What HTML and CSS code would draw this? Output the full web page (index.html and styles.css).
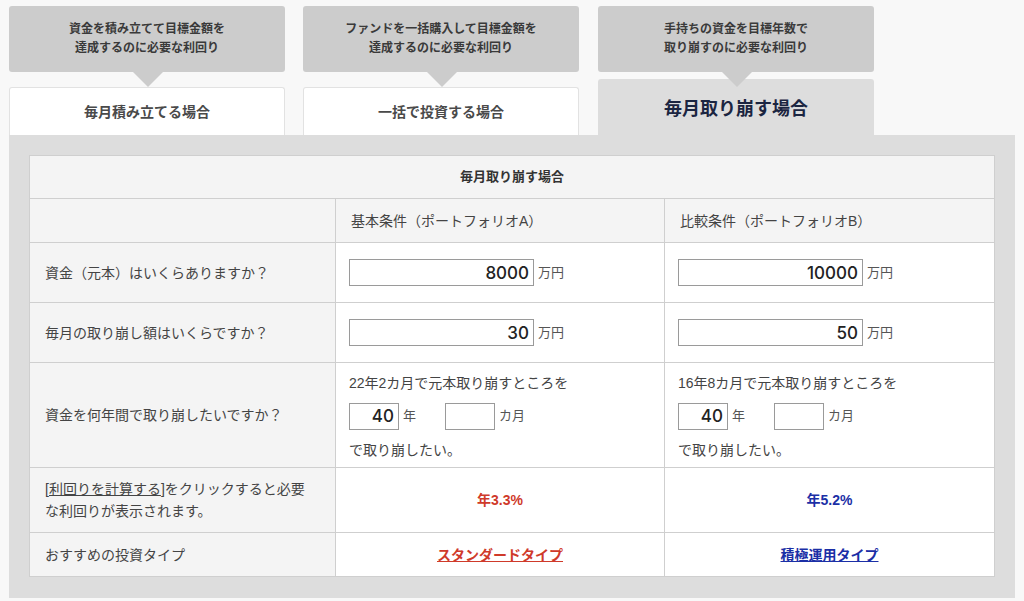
FILE: index.html
```html
<!DOCTYPE html>
<html lang="ja">
<head>
<meta charset="utf-8">
<title>利回り計算</title>
<link rel="stylesheet" href="styles.css">
</head>
<body>
<div class="wrap">
  <div class="tabs">
    <div class="tab-item">
      <div class="tip">資金を積み立てて目標金額を<br>達成するのに必要な利回り</div>
      <div class="tab">毎月積み立てる場合</div>
    </div>
    <div class="tab-item">
      <div class="tip">ファンドを一括購入して目標金額を<br>達成するのに必要な利回り</div>
      <div class="tab">一括で投資する場合</div>
    </div>
    <div class="tab-item">
      <div class="tip">手持ちの資金を目標年数で<br>取り崩すのに必要な利回り</div>
      <div class="tab active">毎月取り崩す場合</div>
    </div>
  </div>
  <div class="panel">
    <table class="calc">
      <colgroup>
        <col class="c1">
        <col class="c2">
        <col class="c3">
      </colgroup>
      <tr class="r-title">
        <th colspan="3">毎月取り崩す場合</th>
      </tr>
      <tr class="r-head">
        <td></td>
        <td>基本条件（ポートフォリオA）</td>
        <td>比較条件（ポートフォリオB）</td>
      </tr>
      <tr class="r-in">
        <td class="label">資金（元本）はいくらありますか？</td>
        <td class="data"><input class="num wide" type="text" value="8000"><span class="unit">万円</span></td>
        <td class="data"><input class="num wide" type="text" value="10000"><span class="unit">万円</span></td>
      </tr>
      <tr class="r-in">
        <td class="label">毎月の取り崩し額はいくらですか？</td>
        <td class="data"><input class="num wide" type="text" value="30"><span class="unit">万円</span></td>
        <td class="data"><input class="num wide" type="text" value="50"><span class="unit">万円</span></td>
      </tr>
      <tr class="r-years">
        <td class="label">資金を何年間で取り崩したいですか？</td>
        <td class="data">
          <div class="years">
            <div class="line">22年2カ月で元本取り崩すところを</div>
            <div class="line inputs"><input class="num short" type="text" value="40"><span class="unit u-year">年</span><input class="num short month" type="text" value=""><span class="unit">カ月</span></div>
            <div class="line">で取り崩したい。</div>
          </div>
        </td>
        <td class="data">
          <div class="years">
            <div class="line">16年8カ月で元本取り崩すところを</div>
            <div class="line inputs"><input class="num short" type="text" value="40"><span class="unit u-year">年</span><input class="num short month" type="text" value=""><span class="unit">カ月</span></div>
            <div class="line">で取り崩したい。</div>
          </div>
        </td>
      </tr>
      <tr class="r-result">
        <td class="label two"><div class="two-lines"><span class="ul">[利回りを計算する</span>]をクリックすると必要</div><div class="two-lines">な利回りが表示されます。</div></td>
        <td class="center"><span class="res red">年3.3%</span></td>
        <td class="center"><span class="res blue">年5.2%</span></td>
      </tr>
      <tr class="r-type">
        <td class="label">おすすめの投資タイプ</td>
        <td class="center"><a class="type red" href="#">スタンダードタイプ</a></td>
        <td class="center"><a class="type blue" href="#">積極運用タイプ</a></td>
      </tr>
    </table>
  </div>
</div>
</body>
</html>
```

FILE: styles.css
```css
html, body {
  margin: 0;
  padding: 0;
  background: #f8f8f8;
}
body {
  font-family: "Liberation Sans", "Noto Sans CJK JP", sans-serif;
  color: #444;
}
.wrap {
  width: 1006px;
  padding: 6px 0 0 9px;
}
.tabs {
  display: flex;
  gap: 18px;
  align-items: flex-end;
}
.tab-item {
  width: 276px;
  display: flex;
  flex-direction: column;
}
.tab-item:last-child {
  margin-left: 1px;
}
.tip {
  position: relative;
  height: 66px;
  box-sizing: border-box;
  padding-top: 14px;
  background: #cccccc;
  border-radius: 3px;
  text-align: center;
  font-size: 12px;
  font-weight: 700;
  line-height: 19px;
  color: #3a3a3a;
}
.tip::after {
  content: "";
  position: absolute;
  left: 124px;
  bottom: -15px;
  width: 0;
  height: 0;
  border-left: 15px solid transparent;
  border-right: 15px solid transparent;
  border-top: 15px solid #cccccc;
  z-index: 2;
}
.tab {
  margin-top: 15px;
  height: 48px;
  box-sizing: border-box;
  background: #ffffff;
  border: 1px solid #e2e2e2;
  border-bottom: none;
  border-radius: 3px 3px 0 0;
  display: flex;
  align-items: center;
  justify-content: center;
  padding-bottom: 2px;
  font-size: 14px;
  font-weight: 700;
  color: #4a4a4a;
}
.tab.active {
  margin-top: 7px;
  height: 56px;
  background: #dddddd;
  border: none;
  padding-top: 0;
  padding-bottom: 0;
  font-size: 18px;
  color: #1b2541;
}
.panel {
  background: #dddddd;
  width: 1006px;
  box-sizing: border-box;
  padding: 20px 21px 21px 20px;
}
.calc {
  width: 965px;
  border-collapse: collapse;
  table-layout: fixed;
  background: #ffffff;
  font-size: 14px;
  line-height: 20px;
}
.c1 { width: 306px; }
.c2 { width: 329px; }
.c3 { width: 330px; }
.calc th, .calc td {
  border: 1px solid #cfcfcf;
  padding: 0;
  vertical-align: middle;
}
.r-title th {
  height: 42px;
  background: #f4f4f4;
  font-size: 13px;
  font-weight: 700;
  color: #333;
  text-align: center;
}
.r-head td {
  height: 43px;
  background: #f4f4f4;
  padding-left: 15px;
  color: #444;
}
.r-in td {
  height: 59px;
}
.r-years td {
  height: 104px;
}
.r-result td {
  height: 64px;
}
.r-type td {
  height: 43px;
}
.label {
  background: #f4f4f4;
  padding-left: 15px !important;
  color: #444;
}
.two-lines {
  height: 22px;
  line-height: 22px;
}
.ul {
  text-decoration: underline;
}
.data {
  padding-left: 13px !important;
}
.num {
  box-sizing: border-box;
  height: 27px;
  border: 1px solid #9a9a9a;
  background: #ffffff;
  margin: 0;
  padding: 0 4px 0 0;
  text-align: right;
  font-family: "Inter", "Liberation Sans", sans-serif;
  font-weight: 500;
  font-size: 17px;
  color: #222;
  vertical-align: middle;
  outline: none;
}
.num.wide {
  width: 185px;
}
.num.short {
  width: 50px;
}
.unit {
  display: inline-block;
  vertical-align: middle;
  margin-left: 4px;
  font-size: 13px;
  color: #555;
}
.u-year {
  width: 42px;
}
.years {
  display: flex;
  flex-direction: column;
  gap: 9px;
  padding-top: 2px;
}
.years .line {
  height: 22px;
  display: flex;
  align-items: center;
  color: #444;
}
.years .line.inputs {
  height: 27px;
}
.center {
  text-align: center;
}
.res {
  font-weight: 700;
  font-size: 14px;
}
.red { color: #cf3a2a; }
.blue { color: #1b2fa6; }
a.type {
  font-weight: 700;
  font-size: 14px;
  text-decoration: underline;
}
```
